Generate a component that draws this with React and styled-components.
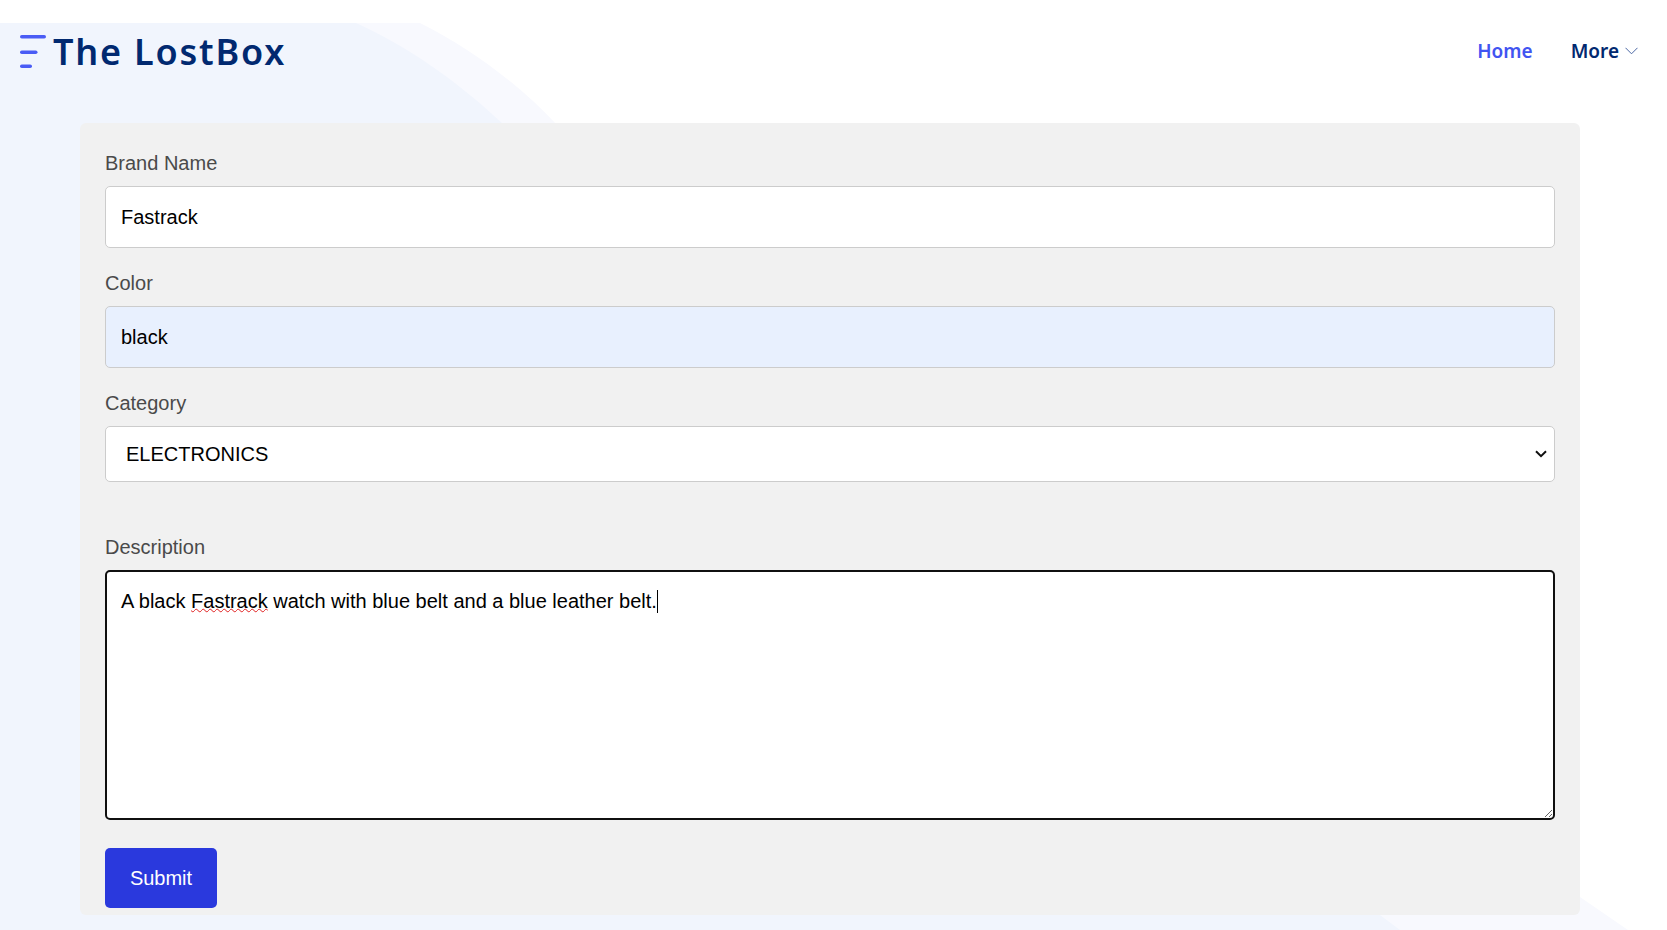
import React from "react";
import styled, { createGlobalStyle } from "styled-components";

const Global = createGlobalStyle`
  html, body { margin: 0; padding: 0; height: 930px; overflow: hidden; background: #fff; }
  * { box-sizing: border-box; }
`;

const Page = styled.div`
  position: relative;
  width: 1667px;
  height: 930px;
  overflow: hidden;
  font-family: "Liberation Sans", Arial, sans-serif;
`;

const Backdrop = styled.svg`
  position: absolute;
  inset: 0;
  width: 1667px;
  height: 930px;
`;

const Content = styled.div`
  position: relative;
  display: flex;
  flex-direction: column;
`;

const Header = styled.header`
  height: 123px;
  padding: 33px 29px 0 20px;
  display: flex;
  align-items: flex-start;
  justify-content: space-between;
`;

const Brand = styled.div`
  display: flex;
  align-items: flex-start;
  gap: 7px;
`;

const Wordmark = styled.span`
  font-family: "Noto Sans", sans-serif;
  font-weight: 600;
  font-size: 36px;
  line-height: 38px;
  letter-spacing: 1.8px;
  color: #012970;
`;

const Nav = styled.nav`
  display: flex;
  align-items: center;
  gap: 38px;
  height: 36px;
  font-family: "Noto Sans", sans-serif;
  font-weight: 600;
  font-size: 19px;
`;

const NavLink = styled.a`
  color: ${(p) => (p.$active ? "#4154f1" : "#012970")};
  display: inline-flex;
  align-items: center;
  gap: 6px;
`;

const Card = styled.form`
  width: 1500px;
  height: 792px;
  margin-left: 80px;
  padding: 29px 25px 0;
  background: #f1f1f1;
  border-radius: 6px;
  display: flex;
  flex-direction: column;
  align-items: flex-start;
`;

const Label = styled.label`
  display: block;
  font-size: 20px;
  line-height: 23px;
  color: #4a4a4a;
  margin-bottom: 11px;
  margin-top: ${(p) => p.$top || 0}px;
`;

const TextInput = styled.input`
  display: block;
  width: 100%;
  height: 62px;
  padding: 0 15px;
  font: 20px "Liberation Sans", Arial, sans-serif;
  color: #000;
  background: ${(p) => (p.$filled ? "#e8f0fe" : "#fff")};
  border: 1px solid #ccc;
  border-radius: 5px;
  outline: none;
`;

const chevron =
  "data:image/svg+xml;utf8,<svg xmlns='http://www.w3.org/2000/svg' width='12' height='8' viewBox='0 0 12 8'><path d='M1 1.2L6 6.2L11 1.2' fill='none' stroke='%23111' stroke-width='2'/></svg>";

const Select = styled.select`
  display: block;
  width: 100%;
  height: 56px;
  padding: 0 20px;
  appearance: none;
  font: 20px "Liberation Sans", Arial, sans-serif;
  color: #000;
  background: #fff url("${chevron}") no-repeat right 7px center;
  border: 1px solid #ccc;
  border-radius: 5px;
  outline: none;
`;

const TextArea = styled.div`
  position: relative;
  width: 100%;
  height: 250px;
  padding: 18px 14px 14px;
  font-size: 20px;
  line-height: 23px;
  color: #000;
  background: #fff;
  border: 2px solid #101010;
  border-radius: 5px;
  overflow: auto;
  resize: both;
`;

const Misspelt = styled.span`
  text-decoration: underline wavy #e02020 1px;
  text-underline-offset: 0;
`;

const Caret = styled.span`
  display: inline-block;
  width: 1px;
  height: 23px;
  background: #000;
  vertical-align: top;
`;

const Submit = styled.button`
  width: 112px;
  height: 60px;
  margin-top: 28px;
  background: #2a39dd;
  color: #fff;
  border: none;
  border-radius: 5px;
  font: 20px "Liberation Sans", Arial, sans-serif;
`;

export default function App() {
  return (
    <Page>
      <Global />
      <Backdrop viewBox="0 0 1667 930" aria-hidden="true">
        <path d="M0 23H420C470 48 520 85 556 124L1580 897L1628 930H0Z" fill="#f8f9fe" />
        <path d="M0 23H356C410 47 462 85 503 124L1380 915L1400 930H0Z" fill="#f1f5fd" />
      </Backdrop>
      <Content>
        <Header>
          <Brand>
            <svg width="26" height="34" viewBox="0 0 26 34" aria-hidden="true" style={{ marginTop: 2 }}>
              <g fill="#4a5cf5">
                <rect x="0" y="0" width="26" height="3.5" rx="1.75" />
                <rect x="0" y="15.5" width="17.5" height="3.5" rx="1.75" />
                <rect x="0" y="29.5" width="12" height="3.5" rx="1.75" />
              </g>
            </svg>
            <Wordmark>The LostBox</Wordmark>
          </Brand>
          <Nav>
            <NavLink $active>Home</NavLink>
            <NavLink>
              More
              <svg width="13" height="8" viewBox="0 0 13 8" aria-hidden="true">
                <path d="M0.5 0.8L6.5 6.8L12.5 0.8" fill="none" stroke="#4a67a3" strokeWidth="1" />
              </svg>
            </NavLink>
          </Nav>
        </Header>
        <Card onSubmit={(e) => e.preventDefault()}>
          <Label>Brand Name</Label>
          <TextInput defaultValue="Fastrack" spellCheck={false} />
          <Label $top={24}>Color</Label>
          <TextInput $filled defaultValue="black" spellCheck={false} />
          <Label $top={24}>Category</Label>
          <Select defaultValue="ELECTRONICS">
            <option>ELECTRONICS</option>
            <option>CLOTHING</option>
            <option>ACCESSORIES</option>
          </Select>
          <Label $top={54}>Description</Label>
          <TextArea role="textbox" aria-multiline="true">
            A black <Misspelt>Fastrack</Misspelt> watch with blue belt and a blue leather belt.<Caret />
          </TextArea>
          <Submit type="submit">Submit</Submit>
        </Card>
      </Content>
    </Page>
  );
}
